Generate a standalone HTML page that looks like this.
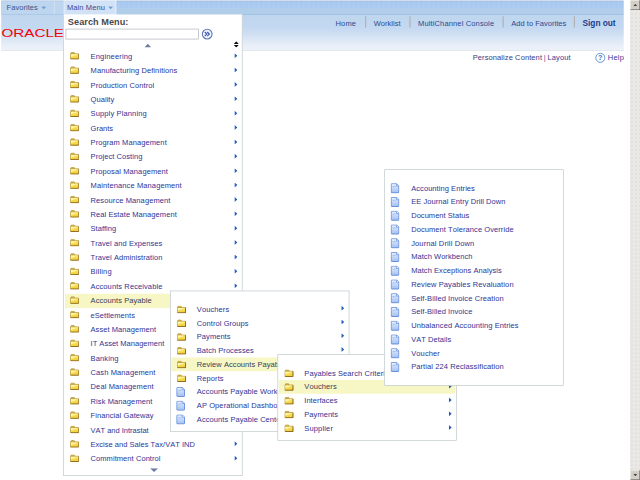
<!DOCTYPE html>
<html><head><meta charset="utf-8"><title>Main Menu</title>
<style>
html,body{margin:0;padding:0;width:640px;height:480px;overflow:hidden;background:#fff}
#s{position:absolute;left:0;top:0;width:1024px;height:768px;transform:scale(0.625);transform-origin:0 0;font-family:"Liberation Sans",Arial,sans-serif;font-size:12px;color:#2f3595;overflow:hidden;background:#fff;font-kerning:none}
#s *{box-sizing:border-box}
.abs{position:absolute}
#nav{left:2px;top:0;width:996px;height:24px;background:linear-gradient(#d2deec 0,#d2deec 1.6px,#a7c4ea 1.6px,#a8c8ef 5px,#aacaf0 12px,#b0cdea 13px,#b0cdea 22.6px,#a3c1e5 22.6px,#a3c1e5 24px)}
#navdots{left:186px;top:3px;width:812px;height:10px;background-image:radial-gradient(circle,#b9d5f5 0,#b9d5f5 1.1px,rgba(185,213,245,0) 1.7px);background-size:8px 4.8px}
#hdr{left:2px;top:24px;width:996px;height:57.4px;background:linear-gradient(#bfd6ef 0%,#c3d8f1 35%,#cfdff3 55%,#dde8f6 72%,#e9eff8 88%,#edf2f9 100%);border-bottom:1.6px solid #d3dbe4}
.navt{top:5px;font-size:12px;color:#3b5486;white-space:nowrap}
.menu{background:#fff;border:1px solid #b7c3c6}
.row{position:relative;height:23px;white-space:nowrap}
.row .ic.f{position:absolute;left:8.7px;top:4.2px}
.row .ic.d{position:absolute;left:9.2px;top:4px}
.row .tx{position:absolute;left:41.9px;top:4.5px;font-size:12px;line-height:14px}
.row .ar{position:absolute;right:7px;top:6px}
.row.hl:before{content:"";position:absolute;left:0.5px;right:1.5px;top:0;bottom:0;background:#f7f7c6}
.r22{height:22px}
.r22 .ic.f{top:4.8px;left:10px}.r22 .ic.d{top:3.2px}.r22 .tx{top:4px}.r22 .ar{top:5.5px}
.hl .tx{color:#3a3a55}
.lnk{font-size:12px;color:#2c4a8e;white-space:nowrap;top:29.8px}
.sep{top:26px;width:2px;height:18px;background:#b3b3b3}
</style></head><body><div id="s">
<svg width="0" height="0" style="position:absolute"><defs><linearGradient id="dg" x1="0" y1="0" x2="0" y2="1"><stop offset="0" stop-color="#f2f6ff"/><stop offset="0.35" stop-color="#cfdefa"/><stop offset="1" stop-color="#a6c0f0"/></linearGradient><linearGradient id="fg" x1="0" y1="0" x2="0.3" y2="1"><stop offset="0" stop-color="#fdf08a"/><stop offset="0.5" stop-color="#f8e058"/><stop offset="1" stop-color="#efcc3c"/></linearGradient></defs></svg>
<div id="nav" class="abs"></div>
<div id="navdots" class="abs"></div>
<div class="abs" style="left:2px;top:1.6px;width:100px;height:21px;background:#bed5ef"></div>
<div id="hdr" class="abs"></div>

<div class="abs navt" style="left:10.6px"><span style="letter-spacing:0.072px">Favorites</span> <svg style="position:relative;top:-1px;margin-left:2px" width="8" height="5" viewBox="0 0 8 5"><path d="M0 0.5 H8 L4 4.8 Z" fill="#6b9bd2"/></svg></div>
<div class="abs" style="left:86px;top:2px;width:2px;height:21px;background:#cfdff3"></div>
<div class="abs" style="left:102px;top:0;width:84px;height:24px;background:#d2e2f6;border:1.6px solid #eef4fb;border-bottom:none"></div>
<div class="abs navt" style="left:107px;color:#46468f"><span style="letter-spacing:0.182px">Main Menu</span> <svg style="position:relative;top:-1px;margin-left:2px" width="8" height="5" viewBox="0 0 8 5"><path d="M0 0.5 H8 L4 4.8 Z" fill="#6b9bd2"/></svg></div>
<svg class="abs" style="left:0;top:44px" width="120" height="18" viewBox="0 0 120 18"><text x="2.4" y="15.2" font-family="Liberation Sans, Arial, sans-serif" font-size="17.6" fill="#f40000" textLength="100" lengthAdjust="spacingAndGlyphs">ORACLE</text></svg>
<div class="abs lnk" style="left:536.8px"><span style="letter-spacing:0.248px">Home</span></div>
<div class="abs lnk" style="left:598px"><span style="letter-spacing:0.042px">Worklist</span></div>
<div class="abs lnk" style="left:668.8px"><span style="letter-spacing:0.23px">MultiChannel Console</span></div>
<div class="abs lnk" style="left:818px"><span style="letter-spacing:0.039px">Add to Favorites</span></div>
<div class="abs lnk" style="left:932px;font-weight:bold;font-size:13.33px;top:29.3px;color:#1c3c8c"><span style="letter-spacing:-0.038px">Sign out</span></div>
<div class="abs sep" style="left:583.5px"></div>
<div class="abs sep" style="left:654.5px"></div>
<div class="abs sep" style="left:803.5px"></div>
<div class="abs sep" style="left:917.5px"></div>
<div class="abs" style="left:756.3px;top:84.5px;font-size:12px;color:#3b3b85;white-space:nowrap"><span style="letter-spacing:0.155px">Personalize Content</span></div>
<div class="abs" style="left:870px;top:84.5px;font-size:12px;color:#7a3a8a">|</div>
<div class="abs" style="left:876px;top:84.5px;font-size:12px;color:#3b3b95;white-space:nowrap"><span style="letter-spacing:0.162px">Layout</span></div>
<svg class="abs" style="left:951.5px;top:83.5px" width="17" height="17" viewBox="0 0 17 17"><circle cx="8.5" cy="8.5" r="7.3" fill="#fff" stroke="#5b8fd6" stroke-width="1.5"/><text x="8.5" y="12.6" text-anchor="middle" font-family="Liberation Sans, sans-serif" font-size="11.5" font-weight="bold" fill="#3a6fc0">?</text></svg>
<div class="abs" style="left:972.5px;top:84.5px;font-size:12px;color:#3b3b98"><span style="letter-spacing:0.33px">Help</span></div>
<div class="abs" style="left:1008px;top:0;width:16px;height:768px;background:#ebe9e3;background-image:radial-gradient(circle,#e0dee6 0,#e0dee6 1.5px,rgba(224,222,230,0) 2.5px);background-size:6.4px 6.4px"></div>
<div class="abs" style="left:1008px;top:0;width:16px;height:16px;background:#d4d0c8;border:1px solid #f4f2ee;border-right-color:#6a6a6a;border-bottom-color:#6a6a6a"></div>
<div class="abs" style="left:1008px;top:752px;width:16px;height:16px;background:#d4d0c8;border:1px solid #f4f2ee;border-right-color:#6a6a6a;border-bottom-color:#6a6a6a"></div>
<svg class="abs" style="left:1013px;top:6px" width="7" height="4"><path d="M0 4 L3.5 0 L7 4Z" fill="#4a4a4a"/></svg>
<svg class="abs" style="left:1013px;top:758px" width="7" height="4"><path d="M0 0 L3.5 4 L7 0Z" fill="#4a4a4a"/></svg>
<div class="abs menu" id="m0" style="left:101px;top:23px;width:287px;height:737.5px;border-top:none"><div class="abs" style="left:1px;top:0;width:284px;height:736px">
<div class="abs" style="left:5.6px;top:3.7px;font-size:14.67px;font-weight:bold;color:#4a4a4a;white-space:nowrap"><span style="letter-spacing:0.067px">Search Menu:</span></div>
<div class="abs" style="left:1.5px;top:22.5px;width:213.7px;height:17.5px;border:1.3px solid #a4abb3;background:#fff"></div>
<svg class="abs" style="left:219.4px;top:22px" width="19" height="19" viewBox="0 0 19 19"><circle cx="9.5" cy="9.5" r="7.8" fill="#eff3fb" stroke="#6078b4" stroke-width="1.8"/><path d="M5.6 6.2 L8.9 9.5 L5.6 12.8 M9.6 6.2 L12.9 9.5 L9.6 12.8" fill="none" stroke="#3250b0" stroke-width="1.7"/></svg>
<svg class="abs" style="left:127.5px;top:46.5px" width="11" height="6"><path d="M0 6 L5.5 0 L11 6Z" fill="#6b7c9c"/></svg>
<svg class="abs" style="left:270.7px;top:42.5px" width="8" height="10" viewBox="0 0 8 10"><path d="M0 4.2 L4 0 L8 4.2Z M0 5.8 L4 10 L8 5.8Z" fill="#111"/></svg>
<div class="abs" style="left:0;top:55.5px;width:284px">
<div class="row "><svg class="ic f" width="14.6" height="12.2" viewBox="0 0 14.6 12.2"><path d="M1.6 3.2 V1.9 Q1.6 0.8 2.7 0.8 H6 Q7.1 0.8 7.1 1.9 V3.2 Z" fill="#f3d24e" stroke="#ad862c" stroke-width="1.1"/><path d="M0.7 3 H13.9 V11.5 H0.7 Z" fill="url(#fg)" stroke="#b08c34" stroke-width="1.1"/><path d="M13.9 3.4 V11.5 H1.2" fill="none" stroke="#8a6218" stroke-width="1.4"/><path d="M1.5 4 H13 L1.5 8 Z" fill="#fffbc0" opacity="0.75"/></svg><span class="tx"><span style="letter-spacing:0.268px">Engineering</span></span><svg class="ar" width="5" height="8" viewBox="0 0 5 8"><path d="M0.2 0 L4.8 4 L0.2 8 Z" fill="#2460b8"/></svg></div>
<div class="row "><svg class="ic f" width="14.6" height="12.2" viewBox="0 0 14.6 12.2"><path d="M1.6 3.2 V1.9 Q1.6 0.8 2.7 0.8 H6 Q7.1 0.8 7.1 1.9 V3.2 Z" fill="#f3d24e" stroke="#ad862c" stroke-width="1.1"/><path d="M0.7 3 H13.9 V11.5 H0.7 Z" fill="url(#fg)" stroke="#b08c34" stroke-width="1.1"/><path d="M13.9 3.4 V11.5 H1.2" fill="none" stroke="#8a6218" stroke-width="1.4"/><path d="M1.5 4 H13 L1.5 8 Z" fill="#fffbc0" opacity="0.75"/></svg><span class="tx"><span style="letter-spacing:0.144px">Manufacturing Definitions</span></span><svg class="ar" width="5" height="8" viewBox="0 0 5 8"><path d="M0.2 0 L4.8 4 L0.2 8 Z" fill="#2460b8"/></svg></div>
<div class="row "><svg class="ic f" width="14.6" height="12.2" viewBox="0 0 14.6 12.2"><path d="M1.6 3.2 V1.9 Q1.6 0.8 2.7 0.8 H6 Q7.1 0.8 7.1 1.9 V3.2 Z" fill="#f3d24e" stroke="#ad862c" stroke-width="1.1"/><path d="M0.7 3 H13.9 V11.5 H0.7 Z" fill="url(#fg)" stroke="#b08c34" stroke-width="1.1"/><path d="M13.9 3.4 V11.5 H1.2" fill="none" stroke="#8a6218" stroke-width="1.4"/><path d="M1.5 4 H13 L1.5 8 Z" fill="#fffbc0" opacity="0.75"/></svg><span class="tx"><span style="letter-spacing:0.145px">Production Control</span></span><svg class="ar" width="5" height="8" viewBox="0 0 5 8"><path d="M0.2 0 L4.8 4 L0.2 8 Z" fill="#2460b8"/></svg></div>
<div class="row "><svg class="ic f" width="14.6" height="12.2" viewBox="0 0 14.6 12.2"><path d="M1.6 3.2 V1.9 Q1.6 0.8 2.7 0.8 H6 Q7.1 0.8 7.1 1.9 V3.2 Z" fill="#f3d24e" stroke="#ad862c" stroke-width="1.1"/><path d="M0.7 3 H13.9 V11.5 H0.7 Z" fill="url(#fg)" stroke="#b08c34" stroke-width="1.1"/><path d="M13.9 3.4 V11.5 H1.2" fill="none" stroke="#8a6218" stroke-width="1.4"/><path d="M1.5 4 H13 L1.5 8 Z" fill="#fffbc0" opacity="0.75"/></svg><span class="tx"><span style="letter-spacing:0.093px">Quality</span></span><svg class="ar" width="5" height="8" viewBox="0 0 5 8"><path d="M0.2 0 L4.8 4 L0.2 8 Z" fill="#2460b8"/></svg></div>
<div class="row "><svg class="ic f" width="14.6" height="12.2" viewBox="0 0 14.6 12.2"><path d="M1.6 3.2 V1.9 Q1.6 0.8 2.7 0.8 H6 Q7.1 0.8 7.1 1.9 V3.2 Z" fill="#f3d24e" stroke="#ad862c" stroke-width="1.1"/><path d="M0.7 3 H13.9 V11.5 H0.7 Z" fill="url(#fg)" stroke="#b08c34" stroke-width="1.1"/><path d="M13.9 3.4 V11.5 H1.2" fill="none" stroke="#8a6218" stroke-width="1.4"/><path d="M1.5 4 H13 L1.5 8 Z" fill="#fffbc0" opacity="0.75"/></svg><span class="tx"><span style="letter-spacing:0.218px">Supply Planning</span></span><svg class="ar" width="5" height="8" viewBox="0 0 5 8"><path d="M0.2 0 L4.8 4 L0.2 8 Z" fill="#2460b8"/></svg></div>
<div class="row "><svg class="ic f" width="14.6" height="12.2" viewBox="0 0 14.6 12.2"><path d="M1.6 3.2 V1.9 Q1.6 0.8 2.7 0.8 H6 Q7.1 0.8 7.1 1.9 V3.2 Z" fill="#f3d24e" stroke="#ad862c" stroke-width="1.1"/><path d="M0.7 3 H13.9 V11.5 H0.7 Z" fill="url(#fg)" stroke="#b08c34" stroke-width="1.1"/><path d="M13.9 3.4 V11.5 H1.2" fill="none" stroke="#8a6218" stroke-width="1.4"/><path d="M1.5 4 H13 L1.5 8 Z" fill="#fffbc0" opacity="0.75"/></svg><span class="tx"><span style="letter-spacing:-0.002px">Grants</span></span><svg class="ar" width="5" height="8" viewBox="0 0 5 8"><path d="M0.2 0 L4.8 4 L0.2 8 Z" fill="#2460b8"/></svg></div>
<div class="row "><svg class="ic f" width="14.6" height="12.2" viewBox="0 0 14.6 12.2"><path d="M1.6 3.2 V1.9 Q1.6 0.8 2.7 0.8 H6 Q7.1 0.8 7.1 1.9 V3.2 Z" fill="#f3d24e" stroke="#ad862c" stroke-width="1.1"/><path d="M0.7 3 H13.9 V11.5 H0.7 Z" fill="url(#fg)" stroke="#b08c34" stroke-width="1.1"/><path d="M13.9 3.4 V11.5 H1.2" fill="none" stroke="#8a6218" stroke-width="1.4"/><path d="M1.5 4 H13 L1.5 8 Z" fill="#fffbc0" opacity="0.75"/></svg><span class="tx"><span style="letter-spacing:0.145px">Program Management</span></span><svg class="ar" width="5" height="8" viewBox="0 0 5 8"><path d="M0.2 0 L4.8 4 L0.2 8 Z" fill="#2460b8"/></svg></div>
<div class="row "><svg class="ic f" width="14.6" height="12.2" viewBox="0 0 14.6 12.2"><path d="M1.6 3.2 V1.9 Q1.6 0.8 2.7 0.8 H6 Q7.1 0.8 7.1 1.9 V3.2 Z" fill="#f3d24e" stroke="#ad862c" stroke-width="1.1"/><path d="M0.7 3 H13.9 V11.5 H0.7 Z" fill="url(#fg)" stroke="#b08c34" stroke-width="1.1"/><path d="M13.9 3.4 V11.5 H1.2" fill="none" stroke="#8a6218" stroke-width="1.4"/><path d="M1.5 4 H13 L1.5 8 Z" fill="#fffbc0" opacity="0.75"/></svg><span class="tx"><span style="letter-spacing:0.109px">Project Costing</span></span><svg class="ar" width="5" height="8" viewBox="0 0 5 8"><path d="M0.2 0 L4.8 4 L0.2 8 Z" fill="#2460b8"/></svg></div>
<div class="row "><svg class="ic f" width="14.6" height="12.2" viewBox="0 0 14.6 12.2"><path d="M1.6 3.2 V1.9 Q1.6 0.8 2.7 0.8 H6 Q7.1 0.8 7.1 1.9 V3.2 Z" fill="#f3d24e" stroke="#ad862c" stroke-width="1.1"/><path d="M0.7 3 H13.9 V11.5 H0.7 Z" fill="url(#fg)" stroke="#b08c34" stroke-width="1.1"/><path d="M13.9 3.4 V11.5 H1.2" fill="none" stroke="#8a6218" stroke-width="1.4"/><path d="M1.5 4 H13 L1.5 8 Z" fill="#fffbc0" opacity="0.75"/></svg><span class="tx"><span style="letter-spacing:0.172px">Proposal Management</span></span><svg class="ar" width="5" height="8" viewBox="0 0 5 8"><path d="M0.2 0 L4.8 4 L0.2 8 Z" fill="#2460b8"/></svg></div>
<div class="row "><svg class="ic f" width="14.6" height="12.2" viewBox="0 0 14.6 12.2"><path d="M1.6 3.2 V1.9 Q1.6 0.8 2.7 0.8 H6 Q7.1 0.8 7.1 1.9 V3.2 Z" fill="#f3d24e" stroke="#ad862c" stroke-width="1.1"/><path d="M0.7 3 H13.9 V11.5 H0.7 Z" fill="url(#fg)" stroke="#b08c34" stroke-width="1.1"/><path d="M13.9 3.4 V11.5 H1.2" fill="none" stroke="#8a6218" stroke-width="1.4"/><path d="M1.5 4 H13 L1.5 8 Z" fill="#fffbc0" opacity="0.75"/></svg><span class="tx"><span style="letter-spacing:0.178px">Maintenance Management</span></span><svg class="ar" width="5" height="8" viewBox="0 0 5 8"><path d="M0.2 0 L4.8 4 L0.2 8 Z" fill="#2460b8"/></svg></div>
<div class="row "><svg class="ic f" width="14.6" height="12.2" viewBox="0 0 14.6 12.2"><path d="M1.6 3.2 V1.9 Q1.6 0.8 2.7 0.8 H6 Q7.1 0.8 7.1 1.9 V3.2 Z" fill="#f3d24e" stroke="#ad862c" stroke-width="1.1"/><path d="M0.7 3 H13.9 V11.5 H0.7 Z" fill="url(#fg)" stroke="#b08c34" stroke-width="1.1"/><path d="M13.9 3.4 V11.5 H1.2" fill="none" stroke="#8a6218" stroke-width="1.4"/><path d="M1.5 4 H13 L1.5 8 Z" fill="#fffbc0" opacity="0.75"/></svg><span class="tx"><span style="letter-spacing:0.172px">Resource Management</span></span><svg class="ar" width="5" height="8" viewBox="0 0 5 8"><path d="M0.2 0 L4.8 4 L0.2 8 Z" fill="#2460b8"/></svg></div>
<div class="row "><svg class="ic f" width="14.6" height="12.2" viewBox="0 0 14.6 12.2"><path d="M1.6 3.2 V1.9 Q1.6 0.8 2.7 0.8 H6 Q7.1 0.8 7.1 1.9 V3.2 Z" fill="#f3d24e" stroke="#ad862c" stroke-width="1.1"/><path d="M0.7 3 H13.9 V11.5 H0.7 Z" fill="url(#fg)" stroke="#b08c34" stroke-width="1.1"/><path d="M13.9 3.4 V11.5 H1.2" fill="none" stroke="#8a6218" stroke-width="1.4"/><path d="M1.5 4 H13 L1.5 8 Z" fill="#fffbc0" opacity="0.75"/></svg><span class="tx"><span style="letter-spacing:0.118px">Real Estate Management</span></span><svg class="ar" width="5" height="8" viewBox="0 0 5 8"><path d="M0.2 0 L4.8 4 L0.2 8 Z" fill="#2460b8"/></svg></div>
<div class="row "><svg class="ic f" width="14.6" height="12.2" viewBox="0 0 14.6 12.2"><path d="M1.6 3.2 V1.9 Q1.6 0.8 2.7 0.8 H6 Q7.1 0.8 7.1 1.9 V3.2 Z" fill="#f3d24e" stroke="#ad862c" stroke-width="1.1"/><path d="M0.7 3 H13.9 V11.5 H0.7 Z" fill="url(#fg)" stroke="#b08c34" stroke-width="1.1"/><path d="M13.9 3.4 V11.5 H1.2" fill="none" stroke="#8a6218" stroke-width="1.4"/><path d="M1.5 4 H13 L1.5 8 Z" fill="#fffbc0" opacity="0.75"/></svg><span class="tx"><span style="letter-spacing:0.038px">Staffing</span></span><svg class="ar" width="5" height="8" viewBox="0 0 5 8"><path d="M0.2 0 L4.8 4 L0.2 8 Z" fill="#2460b8"/></svg></div>
<div class="row "><svg class="ic f" width="14.6" height="12.2" viewBox="0 0 14.6 12.2"><path d="M1.6 3.2 V1.9 Q1.6 0.8 2.7 0.8 H6 Q7.1 0.8 7.1 1.9 V3.2 Z" fill="#f3d24e" stroke="#ad862c" stroke-width="1.1"/><path d="M0.7 3 H13.9 V11.5 H0.7 Z" fill="url(#fg)" stroke="#b08c34" stroke-width="1.1"/><path d="M13.9 3.4 V11.5 H1.2" fill="none" stroke="#8a6218" stroke-width="1.4"/><path d="M1.5 4 H13 L1.5 8 Z" fill="#fffbc0" opacity="0.75"/></svg><span class="tx"><span style="letter-spacing:0.12px">Travel and Expenses</span></span><svg class="ar" width="5" height="8" viewBox="0 0 5 8"><path d="M0.2 0 L4.8 4 L0.2 8 Z" fill="#2460b8"/></svg></div>
<div class="row "><svg class="ic f" width="14.6" height="12.2" viewBox="0 0 14.6 12.2"><path d="M1.6 3.2 V1.9 Q1.6 0.8 2.7 0.8 H6 Q7.1 0.8 7.1 1.9 V3.2 Z" fill="#f3d24e" stroke="#ad862c" stroke-width="1.1"/><path d="M0.7 3 H13.9 V11.5 H0.7 Z" fill="url(#fg)" stroke="#b08c34" stroke-width="1.1"/><path d="M13.9 3.4 V11.5 H1.2" fill="none" stroke="#8a6218" stroke-width="1.4"/><path d="M1.5 4 H13 L1.5 8 Z" fill="#fffbc0" opacity="0.75"/></svg><span class="tx"><span style="letter-spacing:0.109px">Travel Administration</span></span><svg class="ar" width="5" height="8" viewBox="0 0 5 8"><path d="M0.2 0 L4.8 4 L0.2 8 Z" fill="#2460b8"/></svg></div>
<div class="row "><svg class="ic f" width="14.6" height="12.2" viewBox="0 0 14.6 12.2"><path d="M1.6 3.2 V1.9 Q1.6 0.8 2.7 0.8 H6 Q7.1 0.8 7.1 1.9 V3.2 Z" fill="#f3d24e" stroke="#ad862c" stroke-width="1.1"/><path d="M0.7 3 H13.9 V11.5 H0.7 Z" fill="url(#fg)" stroke="#b08c34" stroke-width="1.1"/><path d="M13.9 3.4 V11.5 H1.2" fill="none" stroke="#8a6218" stroke-width="1.4"/><path d="M1.5 4 H13 L1.5 8 Z" fill="#fffbc0" opacity="0.75"/></svg><span class="tx"><span style="letter-spacing:0.283px">Billing</span></span><svg class="ar" width="5" height="8" viewBox="0 0 5 8"><path d="M0.2 0 L4.8 4 L0.2 8 Z" fill="#2460b8"/></svg></div>
<div class="row "><svg class="ic f" width="14.6" height="12.2" viewBox="0 0 14.6 12.2"><path d="M1.6 3.2 V1.9 Q1.6 0.8 2.7 0.8 H6 Q7.1 0.8 7.1 1.9 V3.2 Z" fill="#f3d24e" stroke="#ad862c" stroke-width="1.1"/><path d="M0.7 3 H13.9 V11.5 H0.7 Z" fill="url(#fg)" stroke="#b08c34" stroke-width="1.1"/><path d="M13.9 3.4 V11.5 H1.2" fill="none" stroke="#8a6218" stroke-width="1.4"/><path d="M1.5 4 H13 L1.5 8 Z" fill="#fffbc0" opacity="0.75"/></svg><span class="tx"><span style="letter-spacing:0.155px">Accounts Receivable</span></span><svg class="ar" width="5" height="8" viewBox="0 0 5 8"><path d="M0.2 0 L4.8 4 L0.2 8 Z" fill="#2460b8"/></svg></div>
<div class="row  hl"><svg class="ic f" width="14.6" height="12.2" viewBox="0 0 14.6 12.2"><path d="M1.6 3.2 V1.9 Q1.6 0.8 2.7 0.8 H6 Q7.1 0.8 7.1 1.9 V3.2 Z" fill="#f3d24e" stroke="#ad862c" stroke-width="1.1"/><path d="M0.7 3 H13.9 V11.5 H0.7 Z" fill="url(#fg)" stroke="#b08c34" stroke-width="1.1"/><path d="M13.9 3.4 V11.5 H1.2" fill="none" stroke="#8a6218" stroke-width="1.4"/><path d="M1.5 4 H13 L1.5 8 Z" fill="#fffbc0" opacity="0.75"/></svg><span class="tx"><span style="letter-spacing:0.121px">Accounts Payable</span></span></div>
<div class="row "><svg class="ic f" width="14.6" height="12.2" viewBox="0 0 14.6 12.2"><path d="M1.6 3.2 V1.9 Q1.6 0.8 2.7 0.8 H6 Q7.1 0.8 7.1 1.9 V3.2 Z" fill="#f3d24e" stroke="#ad862c" stroke-width="1.1"/><path d="M0.7 3 H13.9 V11.5 H0.7 Z" fill="url(#fg)" stroke="#b08c34" stroke-width="1.1"/><path d="M13.9 3.4 V11.5 H1.2" fill="none" stroke="#8a6218" stroke-width="1.4"/><path d="M1.5 4 H13 L1.5 8 Z" fill="#fffbc0" opacity="0.75"/></svg><span class="tx"><span style="letter-spacing:0.08px">eSettlements</span></span></div>
<div class="row "><svg class="ic f" width="14.6" height="12.2" viewBox="0 0 14.6 12.2"><path d="M1.6 3.2 V1.9 Q1.6 0.8 2.7 0.8 H6 Q7.1 0.8 7.1 1.9 V3.2 Z" fill="#f3d24e" stroke="#ad862c" stroke-width="1.1"/><path d="M0.7 3 H13.9 V11.5 H0.7 Z" fill="url(#fg)" stroke="#b08c34" stroke-width="1.1"/><path d="M13.9 3.4 V11.5 H1.2" fill="none" stroke="#8a6218" stroke-width="1.4"/><path d="M1.5 4 H13 L1.5 8 Z" fill="#fffbc0" opacity="0.75"/></svg><span class="tx"><span style="letter-spacing:0.101px">Asset Management</span></span></div>
<div class="row "><svg class="ic f" width="14.6" height="12.2" viewBox="0 0 14.6 12.2"><path d="M1.6 3.2 V1.9 Q1.6 0.8 2.7 0.8 H6 Q7.1 0.8 7.1 1.9 V3.2 Z" fill="#f3d24e" stroke="#ad862c" stroke-width="1.1"/><path d="M0.7 3 H13.9 V11.5 H0.7 Z" fill="url(#fg)" stroke="#b08c34" stroke-width="1.1"/><path d="M13.9 3.4 V11.5 H1.2" fill="none" stroke="#8a6218" stroke-width="1.4"/><path d="M1.5 4 H13 L1.5 8 Z" fill="#fffbc0" opacity="0.75"/></svg><span class="tx"><span style="letter-spacing:0.032px">IT Asset Management</span></span></div>
<div class="row "><svg class="ic f" width="14.6" height="12.2" viewBox="0 0 14.6 12.2"><path d="M1.6 3.2 V1.9 Q1.6 0.8 2.7 0.8 H6 Q7.1 0.8 7.1 1.9 V3.2 Z" fill="#f3d24e" stroke="#ad862c" stroke-width="1.1"/><path d="M0.7 3 H13.9 V11.5 H0.7 Z" fill="url(#fg)" stroke="#b08c34" stroke-width="1.1"/><path d="M13.9 3.4 V11.5 H1.2" fill="none" stroke="#8a6218" stroke-width="1.4"/><path d="M1.5 4 H13 L1.5 8 Z" fill="#fffbc0" opacity="0.75"/></svg><span class="tx"><span style="letter-spacing:0.234px">Banking</span></span></div>
<div class="row "><svg class="ic f" width="14.6" height="12.2" viewBox="0 0 14.6 12.2"><path d="M1.6 3.2 V1.9 Q1.6 0.8 2.7 0.8 H6 Q7.1 0.8 7.1 1.9 V3.2 Z" fill="#f3d24e" stroke="#ad862c" stroke-width="1.1"/><path d="M0.7 3 H13.9 V11.5 H0.7 Z" fill="url(#fg)" stroke="#b08c34" stroke-width="1.1"/><path d="M13.9 3.4 V11.5 H1.2" fill="none" stroke="#8a6218" stroke-width="1.4"/><path d="M1.5 4 H13 L1.5 8 Z" fill="#fffbc0" opacity="0.75"/></svg><span class="tx"><span style="letter-spacing:0.174px">Cash Management</span></span></div>
<div class="row "><svg class="ic f" width="14.6" height="12.2" viewBox="0 0 14.6 12.2"><path d="M1.6 3.2 V1.9 Q1.6 0.8 2.7 0.8 H6 Q7.1 0.8 7.1 1.9 V3.2 Z" fill="#f3d24e" stroke="#ad862c" stroke-width="1.1"/><path d="M0.7 3 H13.9 V11.5 H0.7 Z" fill="url(#fg)" stroke="#b08c34" stroke-width="1.1"/><path d="M13.9 3.4 V11.5 H1.2" fill="none" stroke="#8a6218" stroke-width="1.4"/><path d="M1.5 4 H13 L1.5 8 Z" fill="#fffbc0" opacity="0.75"/></svg><span class="tx"><span style="letter-spacing:0.196px">Deal Management</span></span></div>
<div class="row "><svg class="ic f" width="14.6" height="12.2" viewBox="0 0 14.6 12.2"><path d="M1.6 3.2 V1.9 Q1.6 0.8 2.7 0.8 H6 Q7.1 0.8 7.1 1.9 V3.2 Z" fill="#f3d24e" stroke="#ad862c" stroke-width="1.1"/><path d="M0.7 3 H13.9 V11.5 H0.7 Z" fill="url(#fg)" stroke="#b08c34" stroke-width="1.1"/><path d="M13.9 3.4 V11.5 H1.2" fill="none" stroke="#8a6218" stroke-width="1.4"/><path d="M1.5 4 H13 L1.5 8 Z" fill="#fffbc0" opacity="0.75"/></svg><span class="tx"><span style="letter-spacing:0.153px">Risk Management</span></span></div>
<div class="row "><svg class="ic f" width="14.6" height="12.2" viewBox="0 0 14.6 12.2"><path d="M1.6 3.2 V1.9 Q1.6 0.8 2.7 0.8 H6 Q7.1 0.8 7.1 1.9 V3.2 Z" fill="#f3d24e" stroke="#ad862c" stroke-width="1.1"/><path d="M0.7 3 H13.9 V11.5 H0.7 Z" fill="url(#fg)" stroke="#b08c34" stroke-width="1.1"/><path d="M13.9 3.4 V11.5 H1.2" fill="none" stroke="#8a6218" stroke-width="1.4"/><path d="M1.5 4 H13 L1.5 8 Z" fill="#fffbc0" opacity="0.75"/></svg><span class="tx"><span style="letter-spacing:0.135px">Financial Gateway</span></span></div>
<div class="row "><svg class="ic f" width="14.6" height="12.2" viewBox="0 0 14.6 12.2"><path d="M1.6 3.2 V1.9 Q1.6 0.8 2.7 0.8 H6 Q7.1 0.8 7.1 1.9 V3.2 Z" fill="#f3d24e" stroke="#ad862c" stroke-width="1.1"/><path d="M0.7 3 H13.9 V11.5 H0.7 Z" fill="url(#fg)" stroke="#b08c34" stroke-width="1.1"/><path d="M13.9 3.4 V11.5 H1.2" fill="none" stroke="#8a6218" stroke-width="1.4"/><path d="M1.5 4 H13 L1.5 8 Z" fill="#fffbc0" opacity="0.75"/></svg><span class="tx"><span style="letter-spacing:-0.022px">VAT and Intrastat</span></span></div>
<div class="row "><svg class="ic f" width="14.6" height="12.2" viewBox="0 0 14.6 12.2"><path d="M1.6 3.2 V1.9 Q1.6 0.8 2.7 0.8 H6 Q7.1 0.8 7.1 1.9 V3.2 Z" fill="#f3d24e" stroke="#ad862c" stroke-width="1.1"/><path d="M0.7 3 H13.9 V11.5 H0.7 Z" fill="url(#fg)" stroke="#b08c34" stroke-width="1.1"/><path d="M13.9 3.4 V11.5 H1.2" fill="none" stroke="#8a6218" stroke-width="1.4"/><path d="M1.5 4 H13 L1.5 8 Z" fill="#fffbc0" opacity="0.75"/></svg><span class="tx"><span style="letter-spacing:0.033px">Excise and Sales Tax/VAT IND</span></span><svg class="ar" width="5" height="8" viewBox="0 0 5 8"><path d="M0.2 0 L4.8 4 L0.2 8 Z" fill="#2460b8"/></svg></div>
<div class="row "><svg class="ic f" width="14.6" height="12.2" viewBox="0 0 14.6 12.2"><path d="M1.6 3.2 V1.9 Q1.6 0.8 2.7 0.8 H6 Q7.1 0.8 7.1 1.9 V3.2 Z" fill="#f3d24e" stroke="#ad862c" stroke-width="1.1"/><path d="M0.7 3 H13.9 V11.5 H0.7 Z" fill="url(#fg)" stroke="#b08c34" stroke-width="1.1"/><path d="M13.9 3.4 V11.5 H1.2" fill="none" stroke="#8a6218" stroke-width="1.4"/><path d="M1.5 4 H13 L1.5 8 Z" fill="#fffbc0" opacity="0.75"/></svg><span class="tx"><span style="letter-spacing:0.11px">Commitment Control</span></span><svg class="ar" width="5" height="8" viewBox="0 0 5 8"><path d="M0.2 0 L4.8 4 L0.2 8 Z" fill="#2460b8"/></svg></div>
</div>
<svg class="abs" style="left:136.5px;top:725.5px" width="13" height="6"><path d="M0 0 L6.5 6 L13 0Z" fill="#6b7c9c"/></svg>
</div></div>
<div class="abs menu" id="m1" style="left:272px;top:464.8px;width:287px;height:226.5px">
<div class="abs" style="left:0;top:18.2px;width:285px">
<div class="row r22"><svg class="ic f" width="14.6" height="12.2" viewBox="0 0 14.6 12.2"><path d="M1.6 3.2 V1.9 Q1.6 0.8 2.7 0.8 H6 Q7.1 0.8 7.1 1.9 V3.2 Z" fill="#f3d24e" stroke="#ad862c" stroke-width="1.1"/><path d="M0.7 3 H13.9 V11.5 H0.7 Z" fill="url(#fg)" stroke="#b08c34" stroke-width="1.1"/><path d="M13.9 3.4 V11.5 H1.2" fill="none" stroke="#8a6218" stroke-width="1.4"/><path d="M1.5 4 H13 L1.5 8 Z" fill="#fffbc0" opacity="0.75"/></svg><span class="tx"><span style="letter-spacing:0.163px">Vouchers</span></span><svg class="ar" width="5" height="8" viewBox="0 0 5 8"><path d="M0.2 0 L4.8 4 L0.2 8 Z" fill="#2460b8"/></svg></div>
<div class="row r22"><svg class="ic f" width="14.6" height="12.2" viewBox="0 0 14.6 12.2"><path d="M1.6 3.2 V1.9 Q1.6 0.8 2.7 0.8 H6 Q7.1 0.8 7.1 1.9 V3.2 Z" fill="#f3d24e" stroke="#ad862c" stroke-width="1.1"/><path d="M0.7 3 H13.9 V11.5 H0.7 Z" fill="url(#fg)" stroke="#b08c34" stroke-width="1.1"/><path d="M13.9 3.4 V11.5 H1.2" fill="none" stroke="#8a6218" stroke-width="1.4"/><path d="M1.5 4 H13 L1.5 8 Z" fill="#fffbc0" opacity="0.75"/></svg><span class="tx"><span style="letter-spacing:0.116px">Control Groups</span></span><svg class="ar" width="5" height="8" viewBox="0 0 5 8"><path d="M0.2 0 L4.8 4 L0.2 8 Z" fill="#2460b8"/></svg></div>
<div class="row r22"><svg class="ic f" width="14.6" height="12.2" viewBox="0 0 14.6 12.2"><path d="M1.6 3.2 V1.9 Q1.6 0.8 2.7 0.8 H6 Q7.1 0.8 7.1 1.9 V3.2 Z" fill="#f3d24e" stroke="#ad862c" stroke-width="1.1"/><path d="M0.7 3 H13.9 V11.5 H0.7 Z" fill="url(#fg)" stroke="#b08c34" stroke-width="1.1"/><path d="M13.9 3.4 V11.5 H1.2" fill="none" stroke="#8a6218" stroke-width="1.4"/><path d="M1.5 4 H13 L1.5 8 Z" fill="#fffbc0" opacity="0.75"/></svg><span class="tx"><span style="letter-spacing:0.081px">Payments</span></span><svg class="ar" width="5" height="8" viewBox="0 0 5 8"><path d="M0.2 0 L4.8 4 L0.2 8 Z" fill="#2460b8"/></svg></div>
<div class="row r22"><svg class="ic f" width="14.6" height="12.2" viewBox="0 0 14.6 12.2"><path d="M1.6 3.2 V1.9 Q1.6 0.8 2.7 0.8 H6 Q7.1 0.8 7.1 1.9 V3.2 Z" fill="#f3d24e" stroke="#ad862c" stroke-width="1.1"/><path d="M0.7 3 H13.9 V11.5 H0.7 Z" fill="url(#fg)" stroke="#b08c34" stroke-width="1.1"/><path d="M13.9 3.4 V11.5 H1.2" fill="none" stroke="#8a6218" stroke-width="1.4"/><path d="M1.5 4 H13 L1.5 8 Z" fill="#fffbc0" opacity="0.75"/></svg><span class="tx"><span style="letter-spacing:0.064px">Batch Processes</span></span><svg class="ar" width="5" height="8" viewBox="0 0 5 8"><path d="M0.2 0 L4.8 4 L0.2 8 Z" fill="#2460b8"/></svg></div>
<div class="row r22 hl"><svg class="ic f" width="14.6" height="12.2" viewBox="0 0 14.6 12.2"><path d="M1.6 3.2 V1.9 Q1.6 0.8 2.7 0.8 H6 Q7.1 0.8 7.1 1.9 V3.2 Z" fill="#f3d24e" stroke="#ad862c" stroke-width="1.1"/><path d="M0.7 3 H13.9 V11.5 H0.7 Z" fill="url(#fg)" stroke="#b08c34" stroke-width="1.1"/><path d="M13.9 3.4 V11.5 H1.2" fill="none" stroke="#8a6218" stroke-width="1.4"/><path d="M1.5 4 H13 L1.5 8 Z" fill="#fffbc0" opacity="0.75"/></svg><span class="tx"><span style="letter-spacing:0.104px">Review Accounts Payable Info</span></span></div>
<div class="row r22"><svg class="ic f" width="14.6" height="12.2" viewBox="0 0 14.6 12.2"><path d="M1.6 3.2 V1.9 Q1.6 0.8 2.7 0.8 H6 Q7.1 0.8 7.1 1.9 V3.2 Z" fill="#f3d24e" stroke="#ad862c" stroke-width="1.1"/><path d="M0.7 3 H13.9 V11.5 H0.7 Z" fill="url(#fg)" stroke="#b08c34" stroke-width="1.1"/><path d="M13.9 3.4 V11.5 H1.2" fill="none" stroke="#8a6218" stroke-width="1.4"/><path d="M1.5 4 H13 L1.5 8 Z" fill="#fffbc0" opacity="0.75"/></svg><span class="tx"><span style="letter-spacing:0.14px">Reports</span></span></div>
<div class="row r22"><svg class="ic d" width="14.2" height="16.2" viewBox="0 0 13.4 16.2" preserveAspectRatio="none"><path d="M0.8 1.8 Q0.8 0.8 1.8 0.8 H9 L12.6 4.4 V14.4 Q12.6 15.4 11.6 15.4 H1.8 Q0.8 15.4 0.8 14.4 Z" fill="url(#dg)" stroke="#5a88dc" stroke-width="1.4"/><path d="M8.8 1 V4.6 H12.4" fill="#fff" stroke="#5a88dc" stroke-width="1.1"/><path d="M3 5.5 H7.5" stroke="#8fb0ea" stroke-width="1"/></svg><span class="tx"><span style="letter-spacing:0.096px">Accounts Payable WorkCenter</span></span></div>
<div class="row r22"><svg class="ic d" width="14.2" height="16.2" viewBox="0 0 13.4 16.2" preserveAspectRatio="none"><path d="M0.8 1.8 Q0.8 0.8 1.8 0.8 H9 L12.6 4.4 V14.4 Q12.6 15.4 11.6 15.4 H1.8 Q0.8 15.4 0.8 14.4 Z" fill="url(#dg)" stroke="#5a88dc" stroke-width="1.4"/><path d="M8.8 1 V4.6 H12.4" fill="#fff" stroke="#5a88dc" stroke-width="1.1"/><path d="M3 5.5 H7.5" stroke="#8fb0ea" stroke-width="1"/></svg><span class="tx"><span style="letter-spacing:0.149px">AP Operational Dashboard</span></span></div>
<div class="row r22"><svg class="ic d" width="14.2" height="16.2" viewBox="0 0 13.4 16.2" preserveAspectRatio="none"><path d="M0.8 1.8 Q0.8 0.8 1.8 0.8 H9 L12.6 4.4 V14.4 Q12.6 15.4 11.6 15.4 H1.8 Q0.8 15.4 0.8 14.4 Z" fill="url(#dg)" stroke="#5a88dc" stroke-width="1.4"/><path d="M8.8 1 V4.6 H12.4" fill="#fff" stroke="#5a88dc" stroke-width="1.1"/><path d="M3 5.5 H7.5" stroke="#8fb0ea" stroke-width="1"/></svg><span class="tx"><span style="letter-spacing:0.113px">Accounts Payable Center</span></span></div>
</div></div>
<div class="abs menu" id="m2" style="left:444px;top:567px;width:286.5px;height:138px">
<div class="abs" style="left:0;top:18.2px;width:284.5px">
<div class="row r22"><svg class="ic f" width="14.6" height="12.2" viewBox="0 0 14.6 12.2"><path d="M1.6 3.2 V1.9 Q1.6 0.8 2.7 0.8 H6 Q7.1 0.8 7.1 1.9 V3.2 Z" fill="#f3d24e" stroke="#ad862c" stroke-width="1.1"/><path d="M0.7 3 H13.9 V11.5 H0.7 Z" fill="url(#fg)" stroke="#b08c34" stroke-width="1.1"/><path d="M13.9 3.4 V11.5 H1.2" fill="none" stroke="#8a6218" stroke-width="1.4"/><path d="M1.5 4 H13 L1.5 8 Z" fill="#fffbc0" opacity="0.75"/></svg><span class="tx"><span style="letter-spacing:0.136px">Payables Search Criteria</span></span></div>
<div class="row r22 hl"><svg class="ic f" width="14.6" height="12.2" viewBox="0 0 14.6 12.2"><path d="M1.6 3.2 V1.9 Q1.6 0.8 2.7 0.8 H6 Q7.1 0.8 7.1 1.9 V3.2 Z" fill="#f3d24e" stroke="#ad862c" stroke-width="1.1"/><path d="M0.7 3 H13.9 V11.5 H0.7 Z" fill="url(#fg)" stroke="#b08c34" stroke-width="1.1"/><path d="M13.9 3.4 V11.5 H1.2" fill="none" stroke="#8a6218" stroke-width="1.4"/><path d="M1.5 4 H13 L1.5 8 Z" fill="#fffbc0" opacity="0.75"/></svg><span class="tx"><span style="letter-spacing:0.163px">Vouchers</span></span><svg class="ar" width="5" height="8" viewBox="0 0 5 8"><path d="M0.2 0 L4.8 4 L0.2 8 Z" fill="#2460b8"/></svg></div>
<div class="row r22"><svg class="ic f" width="14.6" height="12.2" viewBox="0 0 14.6 12.2"><path d="M1.6 3.2 V1.9 Q1.6 0.8 2.7 0.8 H6 Q7.1 0.8 7.1 1.9 V3.2 Z" fill="#f3d24e" stroke="#ad862c" stroke-width="1.1"/><path d="M0.7 3 H13.9 V11.5 H0.7 Z" fill="url(#fg)" stroke="#b08c34" stroke-width="1.1"/><path d="M13.9 3.4 V11.5 H1.2" fill="none" stroke="#8a6218" stroke-width="1.4"/><path d="M1.5 4 H13 L1.5 8 Z" fill="#fffbc0" opacity="0.75"/></svg><span class="tx"><span style="letter-spacing:0.031px">Interfaces</span></span><svg class="ar" width="5" height="8" viewBox="0 0 5 8"><path d="M0.2 0 L4.8 4 L0.2 8 Z" fill="#2460b8"/></svg></div>
<div class="row r22"><svg class="ic f" width="14.6" height="12.2" viewBox="0 0 14.6 12.2"><path d="M1.6 3.2 V1.9 Q1.6 0.8 2.7 0.8 H6 Q7.1 0.8 7.1 1.9 V3.2 Z" fill="#f3d24e" stroke="#ad862c" stroke-width="1.1"/><path d="M0.7 3 H13.9 V11.5 H0.7 Z" fill="url(#fg)" stroke="#b08c34" stroke-width="1.1"/><path d="M13.9 3.4 V11.5 H1.2" fill="none" stroke="#8a6218" stroke-width="1.4"/><path d="M1.5 4 H13 L1.5 8 Z" fill="#fffbc0" opacity="0.75"/></svg><span class="tx"><span style="letter-spacing:0.081px">Payments</span></span><svg class="ar" width="5" height="8" viewBox="0 0 5 8"><path d="M0.2 0 L4.8 4 L0.2 8 Z" fill="#2460b8"/></svg></div>
<div class="row r22"><svg class="ic f" width="14.6" height="12.2" viewBox="0 0 14.6 12.2"><path d="M1.6 3.2 V1.9 Q1.6 0.8 2.7 0.8 H6 Q7.1 0.8 7.1 1.9 V3.2 Z" fill="#f3d24e" stroke="#ad862c" stroke-width="1.1"/><path d="M0.7 3 H13.9 V11.5 H0.7 Z" fill="url(#fg)" stroke="#b08c34" stroke-width="1.1"/><path d="M13.9 3.4 V11.5 H1.2" fill="none" stroke="#8a6218" stroke-width="1.4"/><path d="M1.5 4 H13 L1.5 8 Z" fill="#fffbc0" opacity="0.75"/></svg><span class="tx"><span style="letter-spacing:0.247px">Supplier</span></span><svg class="ar" width="5" height="8" viewBox="0 0 5 8"><path d="M0.2 0 L4.8 4 L0.2 8 Z" fill="#2460b8"/></svg></div>
</div></div>
<div class="abs menu" id="m3" style="left:615px;top:271px;width:286.6px;height:345.5px">
<div class="abs" style="left:0;top:18.2px;width:284.6px">
<div class="row r22"><svg class="ic d" width="14.2" height="16.2" viewBox="0 0 13.4 16.2" preserveAspectRatio="none"><path d="M0.8 1.8 Q0.8 0.8 1.8 0.8 H9 L12.6 4.4 V14.4 Q12.6 15.4 11.6 15.4 H1.8 Q0.8 15.4 0.8 14.4 Z" fill="url(#dg)" stroke="#5a88dc" stroke-width="1.4"/><path d="M8.8 1 V4.6 H12.4" fill="#fff" stroke="#5a88dc" stroke-width="1.1"/><path d="M3 5.5 H7.5" stroke="#8fb0ea" stroke-width="1"/></svg><span class="tx"><span style="letter-spacing:0.108px">Accounting Entries</span></span></div>
<div class="row r22"><svg class="ic d" width="14.2" height="16.2" viewBox="0 0 13.4 16.2" preserveAspectRatio="none"><path d="M0.8 1.8 Q0.8 0.8 1.8 0.8 H9 L12.6 4.4 V14.4 Q12.6 15.4 11.6 15.4 H1.8 Q0.8 15.4 0.8 14.4 Z" fill="url(#dg)" stroke="#5a88dc" stroke-width="1.4"/><path d="M8.8 1 V4.6 H12.4" fill="#fff" stroke="#5a88dc" stroke-width="1.1"/><path d="M3 5.5 H7.5" stroke="#8fb0ea" stroke-width="1"/></svg><span class="tx"><span style="letter-spacing:0.109px">EE Journal Entry Drill Down</span></span></div>
<div class="row r22"><svg class="ic d" width="14.2" height="16.2" viewBox="0 0 13.4 16.2" preserveAspectRatio="none"><path d="M0.8 1.8 Q0.8 0.8 1.8 0.8 H9 L12.6 4.4 V14.4 Q12.6 15.4 11.6 15.4 H1.8 Q0.8 15.4 0.8 14.4 Z" fill="url(#dg)" stroke="#5a88dc" stroke-width="1.4"/><path d="M8.8 1 V4.6 H12.4" fill="#fff" stroke="#5a88dc" stroke-width="1.1"/><path d="M3 5.5 H7.5" stroke="#8fb0ea" stroke-width="1"/></svg><span class="tx"><span style="letter-spacing:0.064px">Document Status</span></span></div>
<div class="row r22"><svg class="ic d" width="14.2" height="16.2" viewBox="0 0 13.4 16.2" preserveAspectRatio="none"><path d="M0.8 1.8 Q0.8 0.8 1.8 0.8 H9 L12.6 4.4 V14.4 Q12.6 15.4 11.6 15.4 H1.8 Q0.8 15.4 0.8 14.4 Z" fill="url(#dg)" stroke="#5a88dc" stroke-width="1.4"/><path d="M8.8 1 V4.6 H12.4" fill="#fff" stroke="#5a88dc" stroke-width="1.1"/><path d="M3 5.5 H7.5" stroke="#8fb0ea" stroke-width="1"/></svg><span class="tx"><span style="letter-spacing:0.12px">Document Tolerance Override</span></span></div>
<div class="row r22"><svg class="ic d" width="14.2" height="16.2" viewBox="0 0 13.4 16.2" preserveAspectRatio="none"><path d="M0.8 1.8 Q0.8 0.8 1.8 0.8 H9 L12.6 4.4 V14.4 Q12.6 15.4 11.6 15.4 H1.8 Q0.8 15.4 0.8 14.4 Z" fill="url(#dg)" stroke="#5a88dc" stroke-width="1.4"/><path d="M8.8 1 V4.6 H12.4" fill="#fff" stroke="#5a88dc" stroke-width="1.1"/><path d="M3 5.5 H7.5" stroke="#8fb0ea" stroke-width="1"/></svg><span class="tx"><span style="letter-spacing:0.202px">Journal Drill Down</span></span></div>
<div class="row r22"><svg class="ic d" width="14.2" height="16.2" viewBox="0 0 13.4 16.2" preserveAspectRatio="none"><path d="M0.8 1.8 Q0.8 0.8 1.8 0.8 H9 L12.6 4.4 V14.4 Q12.6 15.4 11.6 15.4 H1.8 Q0.8 15.4 0.8 14.4 Z" fill="url(#dg)" stroke="#5a88dc" stroke-width="1.4"/><path d="M8.8 1 V4.6 H12.4" fill="#fff" stroke="#5a88dc" stroke-width="1.1"/><path d="M3 5.5 H7.5" stroke="#8fb0ea" stroke-width="1"/></svg><span class="tx"><span style="letter-spacing:0.086px">Match Workbench</span></span></div>
<div class="row r22"><svg class="ic d" width="14.2" height="16.2" viewBox="0 0 13.4 16.2" preserveAspectRatio="none"><path d="M0.8 1.8 Q0.8 0.8 1.8 0.8 H9 L12.6 4.4 V14.4 Q12.6 15.4 11.6 15.4 H1.8 Q0.8 15.4 0.8 14.4 Z" fill="url(#dg)" stroke="#5a88dc" stroke-width="1.4"/><path d="M8.8 1 V4.6 H12.4" fill="#fff" stroke="#5a88dc" stroke-width="1.1"/><path d="M3 5.5 H7.5" stroke="#8fb0ea" stroke-width="1"/></svg><span class="tx"><span style="letter-spacing:0.091px">Match Exceptions Analysis</span></span></div>
<div class="row r22"><svg class="ic d" width="14.2" height="16.2" viewBox="0 0 13.4 16.2" preserveAspectRatio="none"><path d="M0.8 1.8 Q0.8 0.8 1.8 0.8 H9 L12.6 4.4 V14.4 Q12.6 15.4 11.6 15.4 H1.8 Q0.8 15.4 0.8 14.4 Z" fill="url(#dg)" stroke="#5a88dc" stroke-width="1.4"/><path d="M8.8 1 V4.6 H12.4" fill="#fff" stroke="#5a88dc" stroke-width="1.1"/><path d="M3 5.5 H7.5" stroke="#8fb0ea" stroke-width="1"/></svg><span class="tx"><span style="letter-spacing:0.194px">Review Payables Revaluation</span></span></div>
<div class="row r22"><svg class="ic d" width="14.2" height="16.2" viewBox="0 0 13.4 16.2" preserveAspectRatio="none"><path d="M0.8 1.8 Q0.8 0.8 1.8 0.8 H9 L12.6 4.4 V14.4 Q12.6 15.4 11.6 15.4 H1.8 Q0.8 15.4 0.8 14.4 Z" fill="url(#dg)" stroke="#5a88dc" stroke-width="1.4"/><path d="M8.8 1 V4.6 H12.4" fill="#fff" stroke="#5a88dc" stroke-width="1.1"/><path d="M3 5.5 H7.5" stroke="#8fb0ea" stroke-width="1"/></svg><span class="tx"><span style="letter-spacing:0.14px">Self-Billed Invoice Creation</span></span></div>
<div class="row r22"><svg class="ic d" width="14.2" height="16.2" viewBox="0 0 13.4 16.2" preserveAspectRatio="none"><path d="M0.8 1.8 Q0.8 0.8 1.8 0.8 H9 L12.6 4.4 V14.4 Q12.6 15.4 11.6 15.4 H1.8 Q0.8 15.4 0.8 14.4 Z" fill="url(#dg)" stroke="#5a88dc" stroke-width="1.4"/><path d="M8.8 1 V4.6 H12.4" fill="#fff" stroke="#5a88dc" stroke-width="1.1"/><path d="M3 5.5 H7.5" stroke="#8fb0ea" stroke-width="1"/></svg><span class="tx"><span style="letter-spacing:0.138px">Self-Billed Invoice</span></span></div>
<div class="row r22"><svg class="ic d" width="14.2" height="16.2" viewBox="0 0 13.4 16.2" preserveAspectRatio="none"><path d="M0.8 1.8 Q0.8 0.8 1.8 0.8 H9 L12.6 4.4 V14.4 Q12.6 15.4 11.6 15.4 H1.8 Q0.8 15.4 0.8 14.4 Z" fill="url(#dg)" stroke="#5a88dc" stroke-width="1.4"/><path d="M8.8 1 V4.6 H12.4" fill="#fff" stroke="#5a88dc" stroke-width="1.1"/><path d="M3 5.5 H7.5" stroke="#8fb0ea" stroke-width="1"/></svg><span class="tx"><span style="letter-spacing:0.157px">Unbalanced Accounting Entries</span></span></div>
<div class="row r22"><svg class="ic d" width="14.2" height="16.2" viewBox="0 0 13.4 16.2" preserveAspectRatio="none"><path d="M0.8 1.8 Q0.8 0.8 1.8 0.8 H9 L12.6 4.4 V14.4 Q12.6 15.4 11.6 15.4 H1.8 Q0.8 15.4 0.8 14.4 Z" fill="url(#dg)" stroke="#5a88dc" stroke-width="1.4"/><path d="M8.8 1 V4.6 H12.4" fill="#fff" stroke="#5a88dc" stroke-width="1.1"/><path d="M3 5.5 H7.5" stroke="#8fb0ea" stroke-width="1"/></svg><span class="tx"><span style="letter-spacing:0.059px">VAT Details</span></span></div>
<div class="row r22"><svg class="ic d" width="14.2" height="16.2" viewBox="0 0 13.4 16.2" preserveAspectRatio="none"><path d="M0.8 1.8 Q0.8 0.8 1.8 0.8 H9 L12.6 4.4 V14.4 Q12.6 15.4 11.6 15.4 H1.8 Q0.8 15.4 0.8 14.4 Z" fill="url(#dg)" stroke="#5a88dc" stroke-width="1.4"/><path d="M8.8 1 V4.6 H12.4" fill="#fff" stroke="#5a88dc" stroke-width="1.1"/><path d="M3 5.5 H7.5" stroke="#8fb0ea" stroke-width="1"/></svg><span class="tx"><span style="letter-spacing:0.186px">Voucher</span></span></div>
<div class="row r22"><svg class="ic d" width="14.2" height="16.2" viewBox="0 0 13.4 16.2" preserveAspectRatio="none"><path d="M0.8 1.8 Q0.8 0.8 1.8 0.8 H9 L12.6 4.4 V14.4 Q12.6 15.4 11.6 15.4 H1.8 Q0.8 15.4 0.8 14.4 Z" fill="url(#dg)" stroke="#5a88dc" stroke-width="1.4"/><path d="M8.8 1 V4.6 H12.4" fill="#fff" stroke="#5a88dc" stroke-width="1.1"/><path d="M3 5.5 H7.5" stroke="#8fb0ea" stroke-width="1"/></svg><span class="tx"><span style="letter-spacing:0.14px">Partial 224 Reclassification</span></span></div>
</div></div>
</div></body></html>
